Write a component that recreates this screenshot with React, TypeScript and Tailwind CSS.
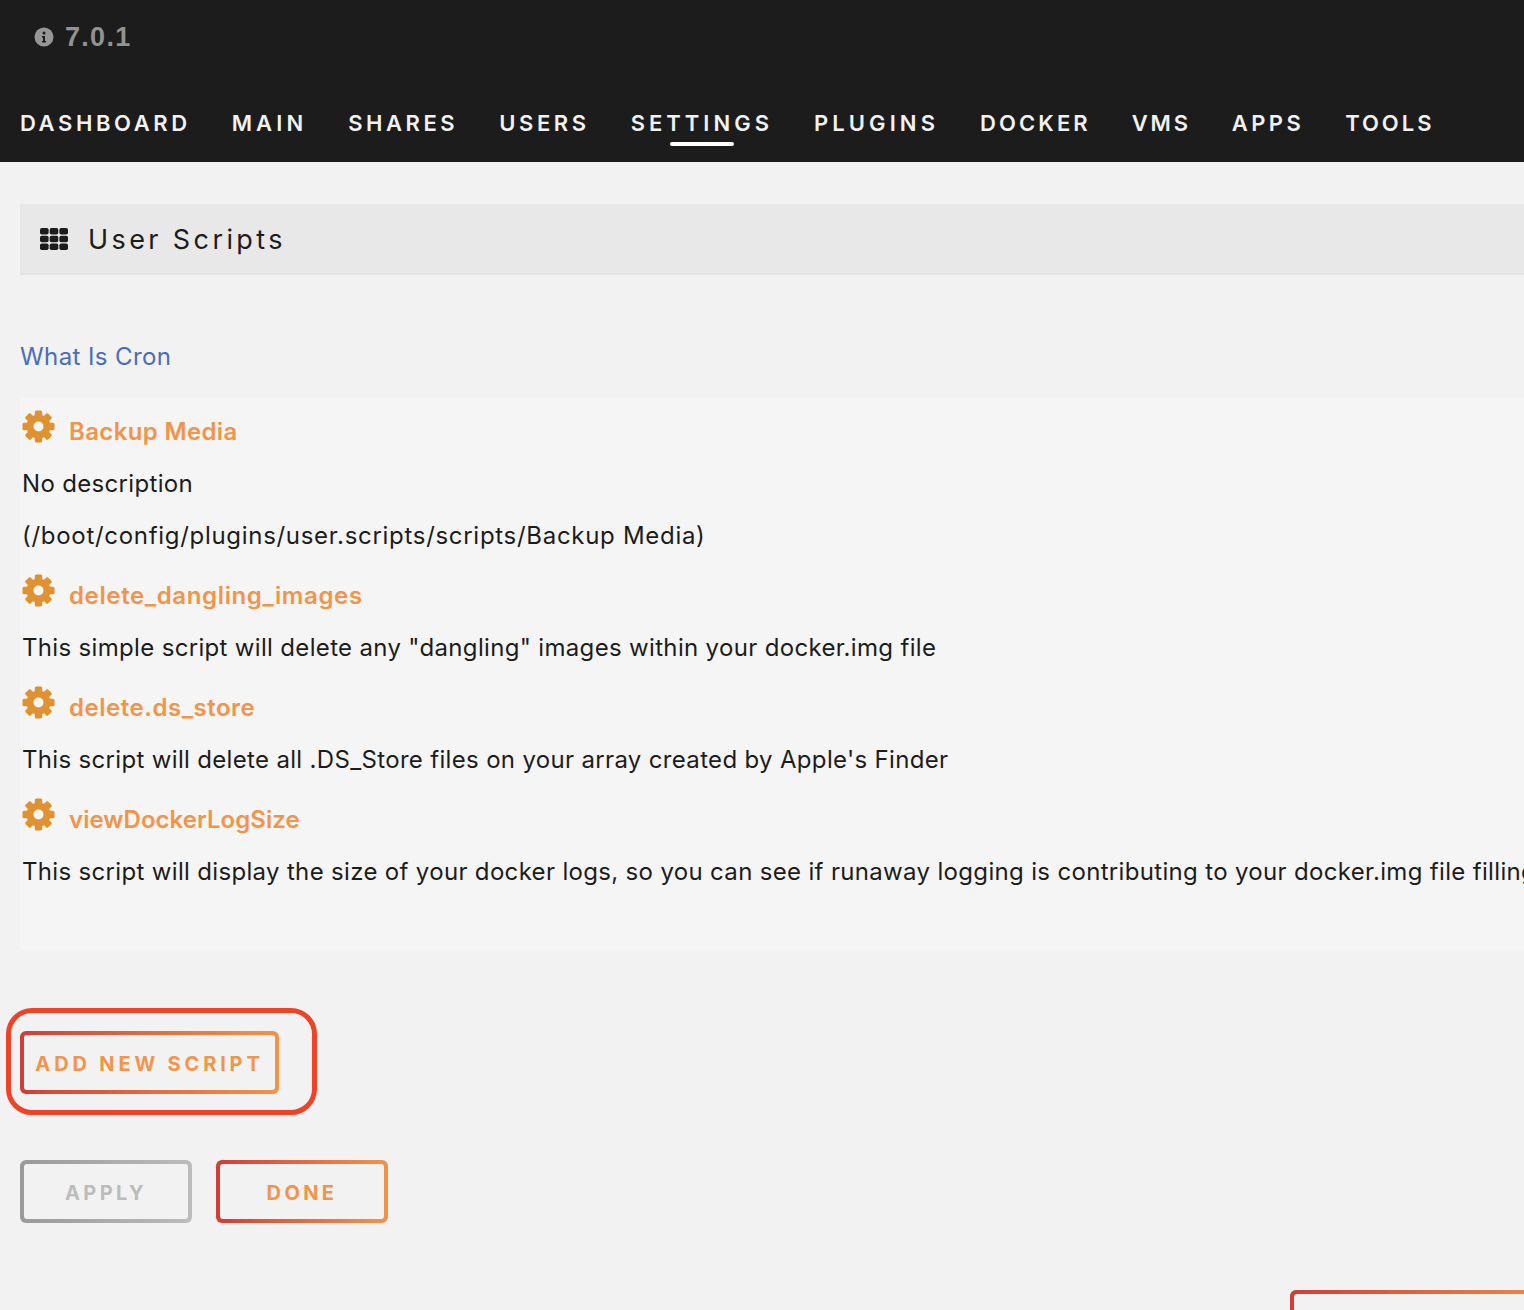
import { ReactNode } from 'react'

/**
 * USER SCRIPTS - Settings page
 * Top bar with the nav, one section title and the list of scripts
 */

const navItems = [
  { label: 'DASHBOARD', spacing: 'tracking-[3.6px]' },
  { label: 'MAIN', spacing: 'tracking-[4.1px]' },
  { label: 'SHARES', spacing: 'tracking-[3.55px]' },
  { label: 'USERS', spacing: 'tracking-[3.6px]' },
  { label: 'SETTINGS', spacing: 'tracking-[4px]' },
  { label: 'PLUGINS', spacing: 'tracking-[4.1px]' },
  { label: 'DOCKER', spacing: 'tracking-[3.1px]' },
  { label: 'VMS', spacing: 'tracking-[2.8px]' },
  { label: 'APPS', spacing: 'tracking-[3.4px]' },
  { label: 'TOOLS', spacing: 'tracking-[3px]' },
]

const scripts = [
  {
    name: 'Backup Media',
    spacing: 'tracking-[0.35px]',
    lines: ['No description', '(/boot/config/plugins/user.scripts/scripts/Backup Media)'],
  },
  {
    name: 'delete_dangling_images',
    spacing: 'tracking-[0.63px]',
    lines: ['This simple script will delete any "dangling" images within your docker.img file'],
  },
  {
    name: 'delete.ds_store',
    spacing: 'tracking-[0.53px]',
    lines: ["This script will delete all .DS_Store files on your array created by Apple's Finder"],
  },
  {
    name: 'viewDockerLogSize',
    spacing: 'tracking-[0.05px]',
    lines: ['This script will display the size of your docker logs, so you can see if runaway logging is contributing to your docker.img file filling up'],
  },
]

const Cog = () => (
  <svg viewBox="0 0 33 33" className="w-[33px] h-[33px] shrink-0">
    <circle cx="16.5" cy="16.5" r="12" fill="#e0922f" />
    {[0, 45, 90, 135].map((deg) => (
      <rect key={deg} x="12.8" y="0.5" width="7.4" height="32" rx="1.5" fill="#e0922f" transform={`rotate(${deg} 16.5 16.5)`} />
    ))}
    <circle cx="16.5" cy="16.5" r="5" fill="#f5f5f5" />
  </svg>
)

const GridIcon = () => (
  <svg viewBox="0 0 28 22" className="w-[28px] h-[22px] fill-[#1c1c1c]">
    {[0, 7.7, 15.4].map((y) =>
      [0, 9.7, 19.4].map((x) => <rect key={`${x}-${y}`} x={x} y={y} width="8.6" height="6.6" rx="1.8" />),
    )}
  </svg>
)

const OutlineButton = ({ children, muted = false, className = '' }: { children: ReactNode; muted?: boolean; className?: string }) => (
  <div
    className={`rounded-[6px] p-[4px] bg-linear-to-r ${
      muted ? 'from-[#9a9a9a] to-[#bcbcbc]' : 'from-[#d13c36] to-[#f2944a]'
    } ${className}`}
  >
    <div
      className={`h-full pt-[2px] rounded-[3px] bg-[#f2f2f2] flex items-center justify-center text-[20px] font-bold tracking-[3.4px] ${
        muted ? 'text-[#bcbcbc]' : 'text-[#f2944a]'
      }`}
    >
      {children}
    </div>
  </div>
)

export default function App() {
  return (
    <div className="w-[1524px] h-[1310px] overflow-hidden bg-[#f2f2f2] font-['Inter',sans-serif] text-[#1c1c1c]">
      {/* Header */}
      <header className="h-[162px] bg-[#1c1c1c] pl-[20px]">
        <div className="h-[74px] pl-[14px] flex items-center gap-[11px] text-[#929292]">
          <svg viewBox="0 0 20 20" className="w-[20px] h-[20px]">
            <circle cx="10" cy="10" r="9.5" fill="#969696" />
            <circle cx="10" cy="6" r="1.5" fill="#1c1c1c" />
            <path d="M8 9h3v5h1v1.5H8V14h1v-3.5H8z" fill="#1c1c1c" />
          </svg>
          <span className="text-[27px] leading-none font-bold tracking-[1.3px] font-['Liberation_Sans',sans-serif]">7.0.1</span>
        </div>
        <nav className="flex gap-[41px] h-[88px]">
          {navItems.map((item) => (
            <div key={item.label} className={`relative h-[72px] pt-[26px] flex items-center text-[22px] font-semibold whitespace-nowrap text-[#f2f2f2] ${item.spacing}`}>
              {item.label}
              {item.label === 'SETTINGS' && (
                <span className="absolute left-[39px] bottom-0 w-[64px] h-[4px] rounded-full bg-white" />
              )}
            </div>
          ))}
        </nav>
      </header>

      <main className="pl-[20px]">
        {/* Section title */}
        <div className="mt-[42px] h-[71px] pl-[20px] flex items-center gap-[20px] bg-[#e8e8e8] border-b-2 border-[#e3e3e3]">
          <GridIcon />
          <span className="pt-[3px] text-[27px] tracking-[3.4px]">User Scripts</span>
        </div>

        <a className="block mt-[64px] h-[36px] leading-[36px] text-[24px] tracking-[0.4px] text-[#486dba]">What Is Cron</a>

        {/* Script list */}
        <section className="mt-[23px] h-[552px] pt-[9px] pl-[2px] bg-[#f5f5f5] whitespace-nowrap text-[24px]">
          {scripts.map((script) => (
            <div key={script.name}>
              <div className="h-[46px] flex items-center gap-[14px]">
                <div className="-mt-[8px]">
                  <Cog />
                </div>
                <span className={`font-semibold text-[#f2944a] mt-[3px] ${script.spacing}`}>{script.name}</span>
              </div>
              {script.lines.map((line) => (
                <p
                  key={line}
                  className={`h-[52px] leading-[52px] pt-[5px] last:h-[66px] ${line.startsWith('(') ? 'tracking-[0.7px]' : 'tracking-[0.33px]'}`}
                >
                  {line}
                </p>
              ))}
            </div>
          ))}
        </section>

        {/* Buttons */}
        <div className="relative mt-[81px] w-[259px] h-[63px]">
          <OutlineButton className="w-full h-full">
            <span className="tracking-[3.85px]">ADD NEW SCRIPT</span>
          </OutlineButton>
          <div className="absolute -left-[14px] -top-[23px] w-[311px] h-[107px] rounded-[26px] border-[5px] border-[#ee4327]" />
        </div>

        <div className="mt-[66px] flex gap-[24px]">
          <OutlineButton muted className="w-[172px] h-[63px]">APPLY</OutlineButton>
          <OutlineButton className="w-[172px] h-[63px]">DONE</OutlineButton>
        </div>

        <OutlineButton className="mt-[67px] ml-[1270px] w-[300px] h-[63px]">{''}</OutlineButton>
      </main>
    </div>
  )
}
